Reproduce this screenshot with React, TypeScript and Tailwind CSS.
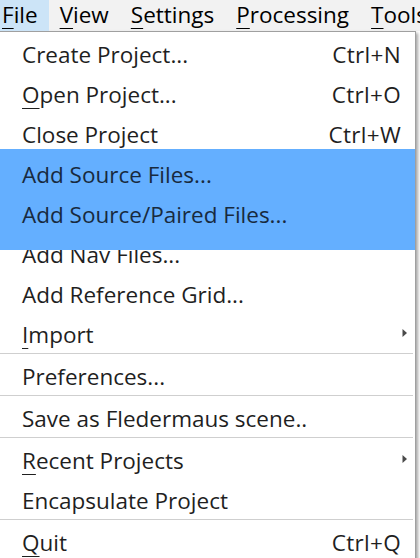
import React from 'react';

interface MenuRow {
  label: string;
  mnemonic?: number; // index of underlined letter
  shortcut?: string;
  submenu?: boolean;
}

const topItems: { label: string; mnemonic: number }[] = [
  { label: 'File', mnemonic: 0 },
  { label: 'View', mnemonic: 0 },
  { label: 'Settings', mnemonic: 0 },
  { label: 'Processing', mnemonic: 0 },
  { label: 'Tools', mnemonic: 0 },
];

// groups of rows, a separator goes between groups
const beforeHighlight: MenuRow[] = [
  { label: 'Create Project...', shortcut: 'Ctrl+N' },
  { label: 'Open Project...', mnemonic: 0, shortcut: 'Ctrl+O' },
  { label: 'Close Project', shortcut: 'Ctrl+W' },
];

const highlighted: MenuRow[] = [
  { label: 'Add Source Files...' },
  { label: 'Add Source/Paired Files...' },
];

const afterHighlight: MenuRow[] = [
  { label: 'Add Nav Files...' },
  { label: 'Add Reference Grid...' },
  { label: 'Import', mnemonic: 0, submenu: true },
];

const lowerGroups: MenuRow[][] = [
  [{ label: 'Preferences...' }],
  [{ label: 'Save as Fledermaus scene..' }],
  [
    { label: 'Recent Projects', mnemonic: 0, submenu: true },
    { label: 'Encapsulate Project' },
  ],
  [{ label: 'Quit', mnemonic: 0, shortcut: 'Ctrl+Q' }],
];

const Label: React.FC<{ text: string; mnemonic?: number }> = ({ text, mnemonic }) => {
  if (mnemonic === undefined) return <span>{text}</span>;
  return (
    <span>
      {text.slice(0, mnemonic)}
      <span className="underline decoration-1 underline-offset-[5px]">{text[mnemonic]}</span>
      {text.slice(mnemonic + 1)}
    </span>
  );
};

const Arrow = () => (
  <svg width="6" height="10" viewBox="0 0 6 10" className="mr-[7px] mt-[-4px]">
    <path d="M0.5 1 L5 5 L0.5 9 Z" fill="#4a4a4a" />
  </svg>
);

const Row: React.FC<{ row: MenuRow }> = ({ row }) => (
  <div
    className={`flex h-[40px] items-center pt-[4px] pl-[22px] leading-[32px] ${row.submenu ? 'pr-0' : 'pr-[14px]'}`}
  >
    <div className="flex-1 whitespace-nowrap">
      <Label text={row.label} mnemonic={row.mnemonic} />
    </div>
    {row.shortcut && <div className="whitespace-nowrap tracking-[0.3px]">{row.shortcut}</div>}
    {row.submenu && <Arrow />}
  </div>
);

const Separator = () => (
  <div className="h-[2px]">
    <div className="h-px w-[413px] bg-[#cfcfcf]" />
  </div>
);

export default function App() {
  return (
    <div
      className="w-[420px] h-[558px] overflow-hidden bg-white text-[22.5px] text-[#1f1f1f]"
      style={{ fontFamily: '"Open Sans", "Noto Sans", sans-serif' }}
    >
      {/* menu bar, first item partly scrolled off the left edge */}
      <div className="flex h-[31px] bg-[#f2f2f2] text-black -ml-[9px] leading-[31px]">
        {topItems.map((item, i) => (
          <div
            key={item.label}
            className={`flex h-full items-center px-[11px] pb-[2px] whitespace-nowrap ${
              i === 0 ? 'bg-[#cce4f7]' : ''
            }`}
          >
            <Label text={item.label} mnemonic={item.mnemonic} />
          </div>
        ))}
      </div>

      {/* dropdown */}
      <div className="w-[416px] h-[600px] border-t border-r border-[#a0a0a0] bg-white pt-px shadow-[2px_2px_3px_rgba(0,0,0,0.35)]">
        {beforeHighlight.map(r => (
          <Row key={r.label} row={r} />
        ))}
        <div className="relative z-10 -mt-[4px] pt-[4px] pb-[17px] -mb-[17px] bg-[#64afff] text-[#182a3e]">
          {highlighted.map(r => (
            <Row key={r.label} row={r} />
          ))}
        </div>
        {afterHighlight.map(r => (
          <Row key={r.label} row={r} />
        ))}
        {lowerGroups.map((group, gi) => (
          <React.Fragment key={gi}>
            <Separator />
            {group.map(r => (
              <Row key={r.label} row={r} />
            ))}
          </React.Fragment>
        ))}
      </div>
    </div>
  );
}
